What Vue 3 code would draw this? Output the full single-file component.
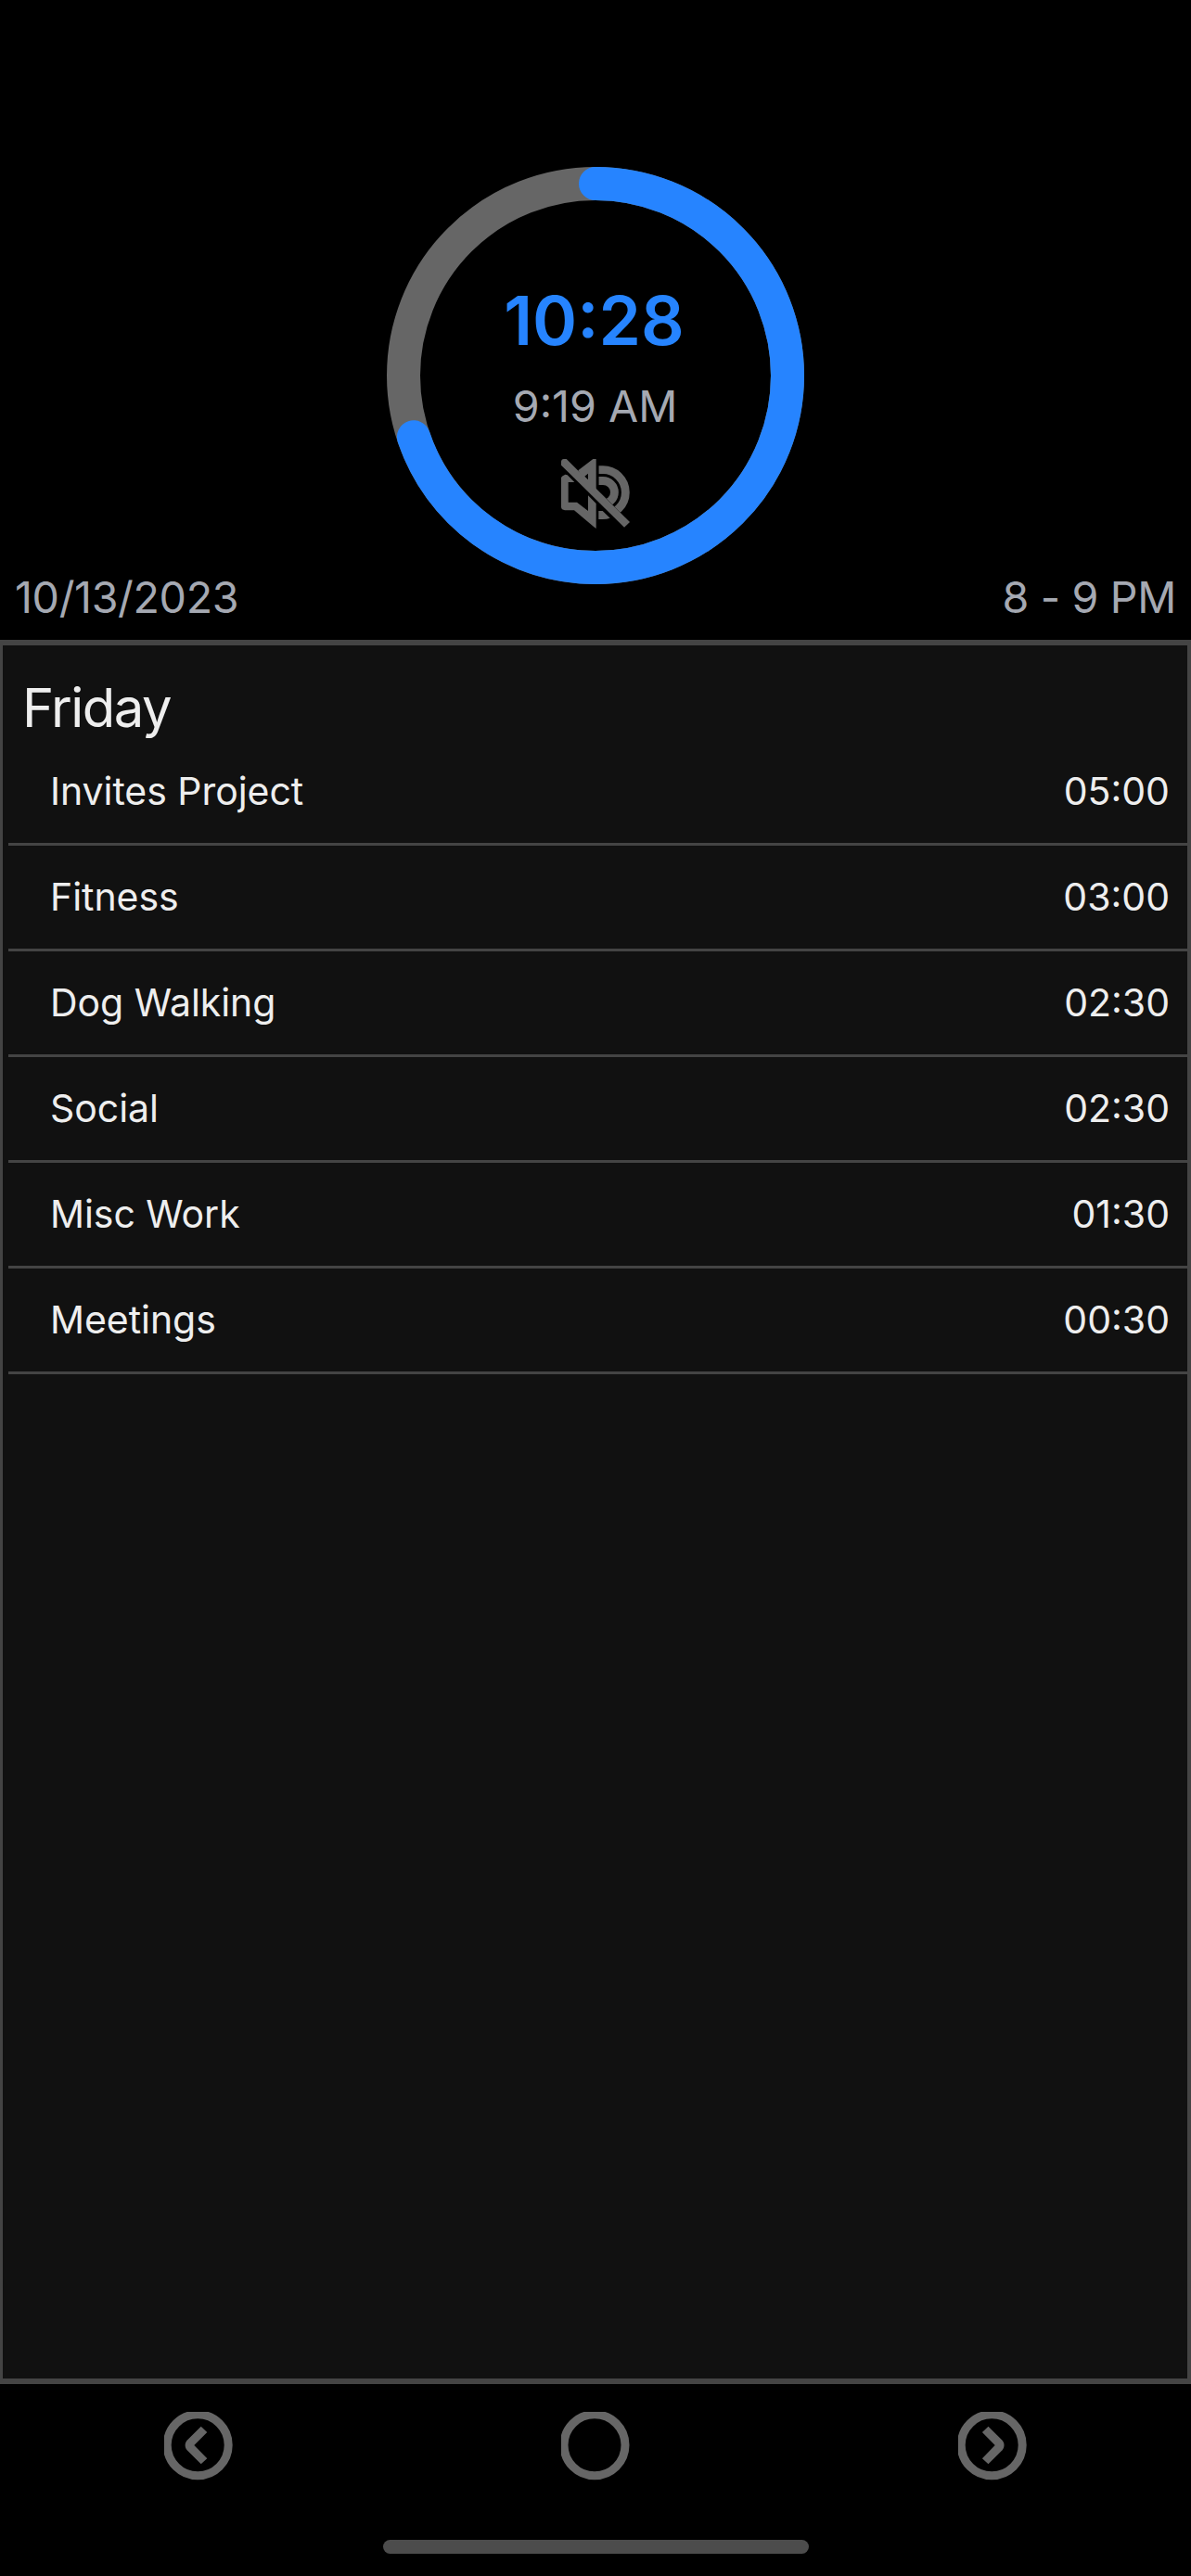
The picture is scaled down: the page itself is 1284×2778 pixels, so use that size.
<script setup>
const radius = 207
const circumference = 2 * Math.PI * radius
const progress = 628 / 900
const dash = `${circumference * progress} ${circumference}`

const entries = [
  { name: 'Invites Project', time: '05:00' },
  { name: 'Fitness', time: '03:00' },
  { name: 'Dog Walking', time: '02:30' },
  { name: 'Social', time: '02:30' },
  { name: 'Misc Work', time: '01:30' },
  { name: 'Meetings', time: '00:30' },
]
</script>

<template>
  <div class="screen">
    <header class="top">
      <span class="meta date">10/13/2023</span>
      <div class="dial">
        <svg class="ring" viewBox="0 0 450 450">
          <circle cx="225" cy="225" :r="radius" class="track" />
          <circle cx="225" cy="225" :r="radius" class="value" :stroke-dasharray="dash" transform="rotate(-90 225 225)" />
        </svg>
        <div class="readout">
          <div class="remaining">10:28</div>
          <div class="clock">9:19 AM</div>
          <svg class="mute" viewBox="0 0 225 225">
            <defs>
              <clipPath id="waves"><path d="M121 0H225V207L121 103Z" /></clipPath>
            </defs>
            <path fill-rule="evenodd" d="M55 37L103 0H113V100L90 90ZM76 56L87 47V67Z" />
            <path fill-rule="evenodd" d="M0 60Q1 55 13 50L20 52L43 75H23V140H51L87 168V118L113 144V225L106 220L42 166H12Q1 164 0 156Z" />
            <path d="M121 168H134L158 191Q148 195 135 195H121Z" />
            <g clip-path="url(#waves)" class="wave">
              <path d="M110 35H135A73 73 0 0 1 135 181" />
              <path d="M110 70.5H135A37 37 0 0 1 135 145" />
            </g>
            <path d="M0 7Q2 0 8 0H17L222 204L204 221L0 20Z" />
          </svg>
        </div>
      </div>
      <span class="meta range">8 - 9 PM</span>
    </header>

    <main class="panel">
      <h1 class="day">Friday</h1>
      <ul class="entries">
        <li v-for="entry in entries" :key="entry.name" class="entry">
          <span class="name">{{ entry.name }}</span>
          <span class="time">{{ entry.time }}</span>
        </li>
      </ul>
    </main>

    <nav class="nav">
      <button class="nav-button" aria-label="Previous">
        <svg viewBox="0 0 75 75">
          <circle cx="36.2" cy="35.8" r="33" />
          <path d="M39.7 15.7L46.3 21.9L32.3 36L46.3 50.2L39.7 56.3L24.6 41.2C22 38.4 22 33.6 24.6 30.8Z" />
        </svg>
      </button>
      <button class="nav-button" aria-label="Today">
        <svg viewBox="0 0 75 75"><circle cx="36" cy="35.8" r="33" /></svg>
      </button>
      <button class="nav-button" aria-label="Next">
        <svg viewBox="0 0 75 75">
          <circle cx="36.2" cy="35.8" r="33" />
          <path d="M32.5 15.7L25.9 21.9L39.7 36L25.9 50.2L32.5 56.3L47.6 41.2C50.2 38.4 50.2 33.6 47.6 30.8Z" />
        </svg>
      </button>
    </nav>
    <div class="home"></div>
  </div>
</template>

<style>
body {
  margin: 0;
  background: #000;
}
</style>

<style scoped>
.screen {
  display: flex;
  flex-direction: column;
  width: 1284px;
  height: 2778px;
  overflow: hidden;
  background: #000;
  color: #eee;
  font-family: Inter, "Liberation Sans", sans-serif;
}
.top {
  display: grid;
  grid-template-columns: 1fr 450px 1fr;
  box-sizing: border-box;
  height: 690px;
  padding: 180px 16px 0;
}
.meta {
  align-self: end;
  margin-bottom: 16px;
  color: #a5a9b2;
  font-size: 46.6px;
  line-height: 60px;
  letter-spacing: -0.35px;
  white-space: nowrap;
}
.range {
  justify-self: end;
}
.dial {
  display: grid;
  height: 450px;
}
.ring,
.readout {
  grid-area: 1 / 1;
}
.ring {
  width: 450px;
  height: 450px;
}
.track,
.value {
  fill: none;
  stroke: #666;
  stroke-width: 36;
}
.value {
  stroke: #2684ff;
  stroke-linecap: round;
}
.readout {
  display: flex;
  flex-direction: column;
  align-items: center;
}
.remaining {
  margin: 121px 3px 0 0;
  color: #2684ff;
  font-size: 73px;
  font-weight: 600;
  line-height: 90px;
}
.clock {
  margin: 17px 1px 0 0;
  color: #a5a9b2;
  font-size: 46.6px;
  line-height: 60px;
}
.mute {
  width: 75px;
  height: 75px;
  margin-top: 27px;
  fill: #666;
}
.wave {
  fill: none;
  stroke: #666;
  stroke-width: 26.5;
}
.panel {
  flex: none;
  box-sizing: border-box;
  height: 1881px;
  border: solid #444;
  border-width: 6px 4px 6px 3px;
  padding-left: 6px;
  background: #111;
}
.day {
  height: 70px;
  margin: 32px 0 0 15px;
  font-size: 58px;
  font-weight: 400;
  line-height: 70px;
  letter-spacing: -1.5px;
}
.entries {
  margin: 0;
  padding: 0;
  list-style: none;
}
.entry {
  display: flex;
  align-items: center;
  justify-content: space-between;
  box-sizing: border-box;
  height: 114px;
  border-bottom: 3px solid #444;
  padding: 0 19px 2px 45px;
  font-size: 41px;
  line-height: 50px;
}
.name {
  letter-spacing: -0.05px;
}
.nav {
  display: flex;
  justify-content: space-between;
  padding: 30px 176px 0 177px;
}
.nav-button {
  width: 75px;
  height: 75px;
  border: 0;
  padding: 0;
  background: none;
}
.nav-button svg {
  display: block;
  width: 75px;
  height: 75px;
  fill: #666;
}
.nav-button circle {
  fill: none;
  stroke: #666;
  stroke-width: 9;
}
.home {
  width: 459px;
  height: 15px;
  margin: 63px 0 0 413px;
  border-radius: 8px;
  background: #4c4c4c;
}
</style>
